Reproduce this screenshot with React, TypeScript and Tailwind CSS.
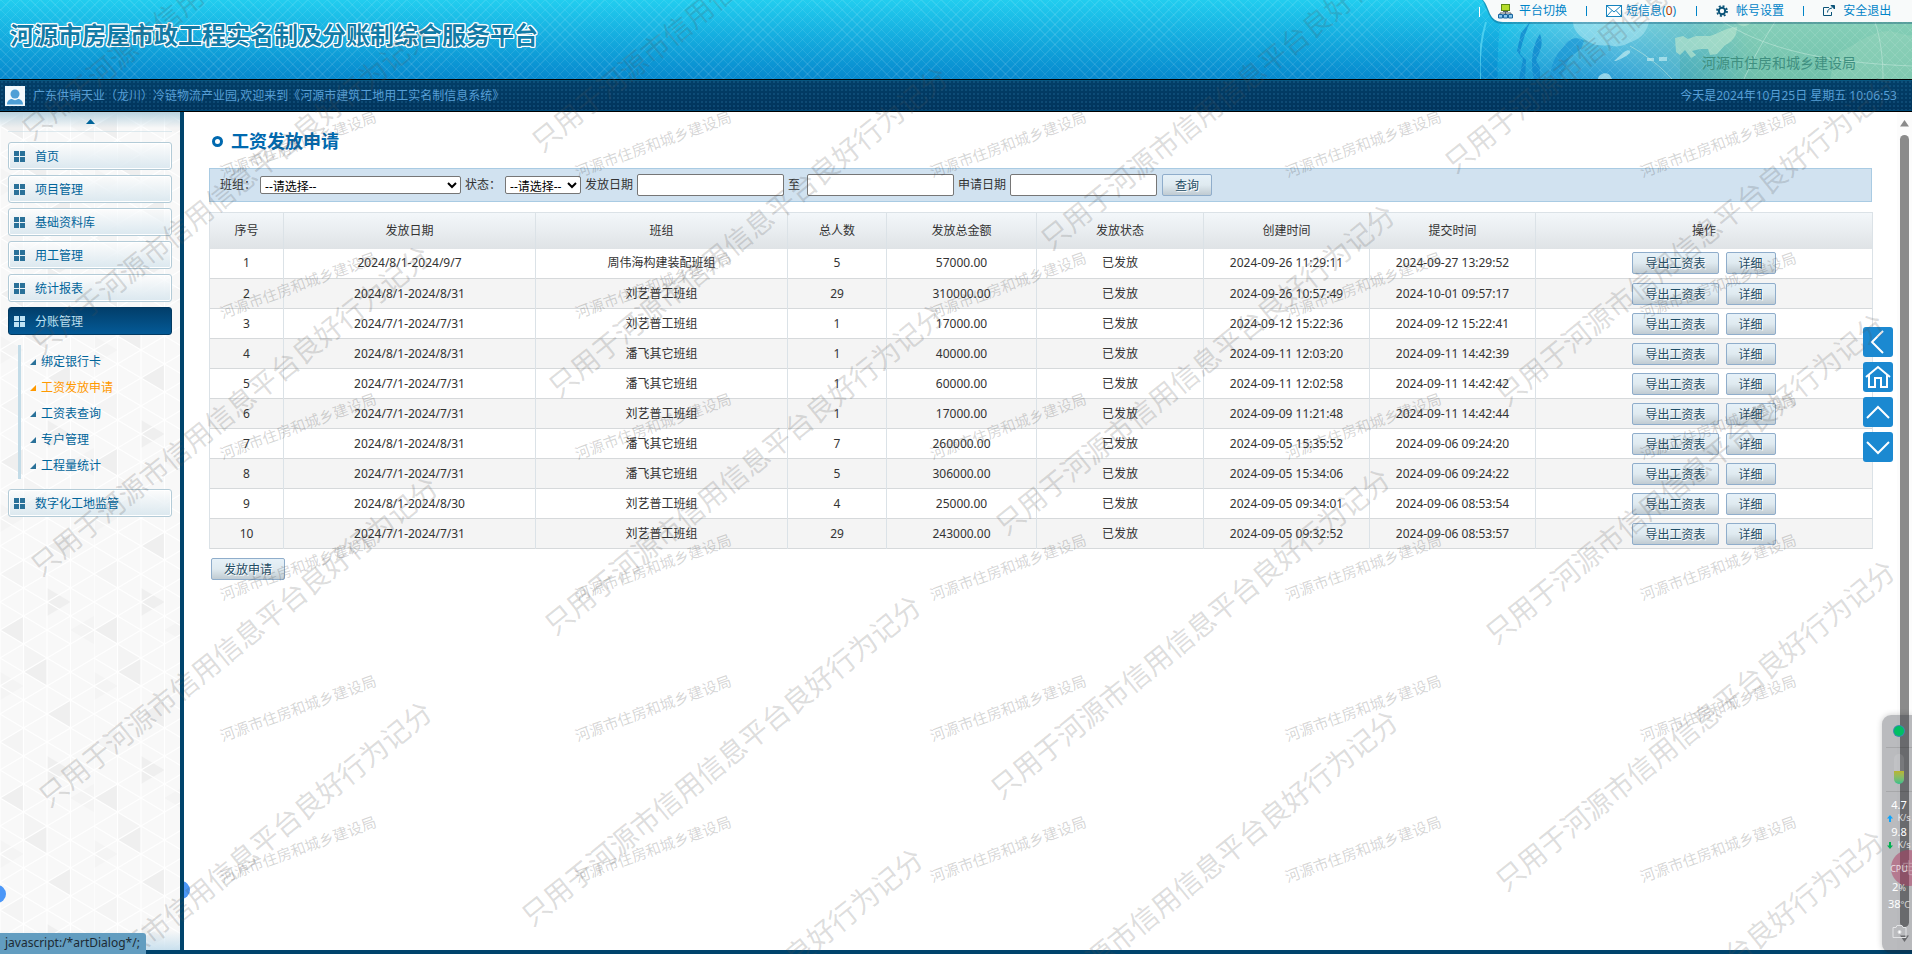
import { useState } from "react";
import { clsx } from "clsx";

const MENUS = ["首页", "项目管理", "基础资料库", "用工管理", "统计报表"];

const SUB_MENUS = ["绑定银行卡", "工资发放申请", "工资表查询", "专户管理", "工程量统计"];

const ROWS = [
  { date: "2024/8/1-2024/9/7", team: "周伟海构建装配班组", count: 5, amount: "57000.00", created: "2024-09-26 11:29:11", submitted: "2024-09-27 13:29:52" },
  { date: "2024/8/1-2024/8/31", team: "刘艺普工班组", count: 29, amount: "310000.00", created: "2024-09-26 10:57:49", submitted: "2024-10-01 09:57:17" },
  { date: "2024/7/1-2024/7/31", team: "刘艺普工班组", count: 1, amount: "17000.00", created: "2024-09-12 15:22:36", submitted: "2024-09-12 15:22:41" },
  { date: "2024/8/1-2024/8/31", team: "潘飞其它班组", count: 1, amount: "40000.00", created: "2024-09-11 12:03:20", submitted: "2024-09-11 14:42:39" },
  { date: "2024/7/1-2024/7/31", team: "潘飞其它班组", count: 1, amount: "60000.00", created: "2024-09-11 12:02:58", submitted: "2024-09-11 14:42:42" },
  { date: "2024/7/1-2024/7/31", team: "刘艺普工班组", count: 1, amount: "17000.00", created: "2024-09-09 11:21:48", submitted: "2024-09-11 14:42:44" },
  { date: "2024/8/1-2024/8/31", team: "潘飞其它班组", count: 7, amount: "260000.00", created: "2024-09-05 15:35:52", submitted: "2024-09-06 09:24:20" },
  { date: "2024/7/1-2024/7/31", team: "潘飞其它班组", count: 5, amount: "306000.00", created: "2024-09-05 15:34:06", submitted: "2024-09-06 09:24:22" },
  { date: "2024/8/1-2024/8/30", team: "刘艺普工班组", count: 4, amount: "25000.00", created: "2024-09-05 09:34:01", submitted: "2024-09-06 08:53:54" },
  { date: "2024/7/1-2024/7/31", team: "刘艺普工班组", count: 29, amount: "243000.00", created: "2024-09-05 09:32:52", submitted: "2024-09-06 08:53:57" },
];

const COLUMNS = [
  { title: "序号", width: "w-[74px]" },
  { title: "发放日期", width: "w-[252px]" },
  { title: "班组", width: "w-[252px]" },
  { title: "总人数", width: "w-[99px]" },
  { title: "发放总金额", width: "w-[150px]" },
  { title: "发放状态", width: "w-[167px]" },
  { title: "创建时间", width: "w-[166px]" },
  { title: "提交时间", width: "w-[166px]" },
  { title: "操作", width: "w-[337px]" },
];

// 水印中心点
const LARGE_MARKS = [
  [221, -26], [231, 188], [230, 410], [238, 641], [232, 866],
  [731, -14], [748, 231], [744, 469], [721, 760], [723, 1013],
  [1240, 84], [1195, 369], [1190, 633], [1198, 875],
  [1644, 7], [1696, 240], [1685, 478], [1695, 725], [1684, 995],
];
const SMALL_MARKS = [144, 285, 426, 567, 708, 849].flatMap((y) =>
  [298, 653, 1008, 1363, 1718].map((x) => [x, y])
);

function Watermarks() {
  return (
    <div aria-hidden="true" className="pointer-events-none absolute inset-0 z-20 overflow-hidden">
      {LARGE_MARKS.map(([x, y]) => (
        <span
          key={`l-${x}-${y}`}
          className="absolute -translate-x-1/2 -translate-y-1/2 -rotate-39 whitespace-nowrap text-[28px] leading-8 text-[#505050]/20"
          style={{ left: x, top: y }}
        >
          只用于河源市信用信息平台良好行为记分
        </span>
      ))}
      {SMALL_MARKS.map(([x, y]) => (
        <span
          key={`s-${x}-${y}`}
          className="absolute -translate-x-1/2 -translate-y-1/2 -rotate-20 whitespace-nowrap text-[15px] leading-5 text-[#404040]/22"
          style={{ left: x, top: y }}
        >
          河源市住房和城乡建设局
        </span>
      ))}
    </div>
  );
}

function GlobeArt() {
  return (
    <svg className="absolute top-0 right-0 h-[79px] w-[432px]" viewBox="0 0 432 79" preserveAspectRatio="none">
      <defs>
        <linearGradient id="sea" x1="0" y1="0" x2="1" y2="0">
          <stop offset="0" stopColor="#1cc4ea" />
          <stop offset="0.1" stopColor="#45c8e8" />
          <stop offset="0.28" stopColor="#72d0e6" />
          <stop offset="0.46" stopColor="#74c8cc" />
          <stop offset="0.6" stopColor="#86cfba" />
          <stop offset="1" stopColor="#84ceb6" />
        </linearGradient>
        <linearGradient id="deep" x1="0" y1="0" x2="0" y2="1">
          <stop offset="0.3" stopColor="#0b8fd0" stopOpacity="0" />
          <stop offset="1" stopColor="#0d86cc" stopOpacity="0.7" />
        </linearGradient>
        <linearGradient id="shade" x1="0" y1="0" x2="0" y2="1">
          <stop offset="0.3" stopColor="#3fa088" stopOpacity="0" />
          <stop offset="1" stopColor="#3fa088" stopOpacity="0.3" />
        </linearGradient>
        <linearGradient id="fade" x1="0" y1="0" x2="1" y2="0">
          <stop offset="0.3" stopColor="#fff" />
          <stop offset="0.65" stopColor="#fff" stopOpacity="0" />
        </linearGradient>
        <mask id="left">
          <rect width="432" height="79" fill="url(#fade)" />
        </mask>
        <pattern id="net" width="10" height="10" patternUnits="userSpaceOnUse">
          <path d="M0 0 10 10M10 0 0 10" stroke="#fff" strokeOpacity="0.14" strokeWidth="0.800" />
        </pattern>
      </defs>
      <path d="M26 0C19 25 17 50 18 79H432V0Z" fill="url(#sea)" />
      <path d="M26 0C19 25 17 50 18 79H432V0Z" fill="url(#deep)" mask="url(#left)" />
      <rect x="200" width="232" height="79" fill="url(#shade)" />
      <path d="M6 22C0 42-1 60 0 79" fill="none" stroke="#5fdcf5" strokeWidth="2" opacity="0.7" />
      <path d="M50 22c-4 10-9 22-10 32l6 6-1 19h-6l4-20-6-8 4-18zM60 34c4 10 0 18-4 26l4 8 0 11h-6c-4-14-2-34 6-45z" fill="#0e86cc" opacity="0.75" />
      <path d="M84 46c5-8 14-10 20-5l-3 8-11 8-10 22H70c0-12 5-24 14-33z" fill="#1490d2" opacity="0.6" />
      <path d="M93 22h76c-2 8-6 16-18 20-8 4-14 6-22 3-12 2-20-2-26-7-6-4-10-10-10-16z" fill="#b4eaf2" opacity="0.5" />
      <path d="M134 61l10-9c4-3 7-2 6 1-4 4-10 6-14 8zM167 58h7v3h-7zM179 57h8v4h-8zM118 79c0-5 10-9 13-2l1 2z" fill="#c4eef2" opacity="0.65" />
      <path d="M195 38l8-2 5 3 8-3h14c8-2 14-8 27-9 0 8-4 15-12 18l-8 9-7 1-2-6-8 0-8 2 4 4-5 3-6-8-5 5-4-3z" fill="#b4e2cc" opacity="0.7" />
      <path d="M256 22c6 7 12 4 16 0z" fill="#b4e2cc" opacity="0.6" />
      <path d="M350 79c2-12 8-22 8-26 18-8 30-20 48-22 12 0 20 6 26 4v44z" fill="#9cd6be" opacity="0.4" />
      <path d="M150 46c18 10 32 22 42 33M264 79c10-22 20-40 31-57M243 22c40 24 90 40 189 44M395 22c6 18 8 38 8 57" fill="none" stroke="#c9ecdf" strokeOpacity="0.5" />
      <rect x="18" width="414" height="79" fill="url(#net)" />
    </svg>
  );
}

function TopLinks() {
  return (
    <nav className="relative flex h-[22px] w-[433px] items-center pl-[19px] text-xs leading-4 text-[#0084c8]">
      <svg className="absolute top-0 left-0 -z-10" width="433" height="24" viewBox="0 0 433 24">
        <path d="M3 0C9 8 9 24 24 24H433V0Z" fill="#06486c" opacity="0.35" />
        <path d="M4 0C11 7 9 22 24 22H433V0Z" fill="#f8fafa" />
      </svg>
      <span className="absolute top-[7px] left-0 h-[10px] w-px bg-white" />
      <a href="#platform" className="flex items-center gap-[6px]">
        <svg width="15" height="15" viewBox="0 0 15 15">
          <rect x="3.5" y="0.5" width="8" height="6" fill="#b6dc2a" stroke="#5f8a12" />
          <path d="M5 7.500h5M7.500 7v2M2 10.500v-1.500h11v1.500M7.500 9v2" fill="none" stroke="#57606a" />
          <path d="M.5 10.500h4v3.500h-4zM5.500 10.500h4v3.500h-4zM10.500 10.500h4v3.500h-4z" fill="#8cc8ee" stroke="#1b669f" />
        </svg>
        平台切换
      </a>
      <span className="ml-[19px] h-[10px] w-px bg-[#0084c8]" />
      <a href="#message" className="ml-[19px] flex items-center gap-1">
        <svg width="16" height="12" viewBox="0 0 16 12" fill="none" stroke="#1683be">
          <rect x="0.5" y="0.5" width="15" height="11" fill="#fff" />
          <path d="M.5.5 8 7 15.500.5M.5 11.500 6 5.500M15.500 11.500 10 5.500" />
        </svg>
        <span>短信息(<b className="font-normal text-[#b03a00]">0</b>)</span>
      </a>
      <span className="ml-5 h-[10px] w-px bg-[#0084c8]" />
      <a href="#account" className="ml-[19px] flex items-center gap-2">
        <svg width="12" height="12" viewBox="0 0 12 12" fill="none" stroke="#0a5378">
          <circle cx="6" cy="6" r="3.200" strokeWidth="2" />
          <circle cx="6" cy="6" r="5" strokeWidth="1.800" strokeDasharray="1.963 1.963" />
        </svg>
        帐号设置
      </a>
      <span className="ml-[19px] h-[10px] w-px bg-[#0084c8]" />
      <a href="#logout" className="ml-[19px] flex items-center gap-2">
        <svg width="12" height="12" viewBox="0 0 12 12" fill="none" stroke="#0a5378">
          <path d="M6 2.500H.5v8h8V7M4.500 7.500C4.500 5 6 3.500 9 3" />
          <path d="M8 .5h3.500V4z" fill="#0a5378" />
        </svg>
        安全退出
      </a>
    </nav>
  );
}

function Header() {
  return (
    <header className="shrink-0">
      <div className="relative flex h-[79px] items-start justify-between bg-[repeating-linear-gradient(45deg,rgba(255,255,255,0.09)_0_1px,transparent_1px_7px),repeating-linear-gradient(-45deg,rgba(255,255,255,0.09)_0_1px,transparent_1px_7px),linear-gradient(#22cdef,#0688cd)]">
        <h1 className="pt-[19px] pl-[10px] text-2xl leading-8 font-bold text-[#127ba6] [text-shadow:1px_0_#fff,-1px_0_#fff,0_1px_#fff,0_-1px_#fff,1px_1px_#fff,-1px_-1px_#fff,1px_-1px_#fff,-1px_1px_#fff,0_0_2px_#fff]">
          河源市房屋市政工程实名制及分账制综合服务平台
        </h1>
        <GlobeArt />
        <div className="relative isolate flex flex-col items-end">
          <TopLinks />
          <p className="mt-[31px] mr-14 text-sm leading-5 text-[#3f8f80]">河源市住房和城乡建设局</p>
        </div>
      </div>
      <div className="flex h-[33px] items-center justify-between border-y border-black bg-[radial-gradient(circle,rgba(60,150,200,0.2)_0_0.7px,transparent_1px),linear-gradient(#033f68,#01345c)] bg-size-[4px_4px,100%_100%] pr-[15px] pl-[5px] text-xs leading-4 text-[#579fd6] shadow-[inset_0_1px_#07567f,inset_0_-1px_#004a78]">
        <div className="flex items-center gap-2">
          <svg width="20" height="20" viewBox="0 0 20 20">
            <rect width="20" height="20" fill="#f2f8fc" />
            <circle cx="10" cy="8" r="4.500" fill="#4f9fd6" />
            <path d="M2 18.500c0-4 3-5.500 5-5.500 2 1.500 4 1.500 6 0 2 0 5 1.500 5 5.500z" fill="#4f9fd6" />
          </svg>
          <span className="pt-px">广东供销天业（龙川）冷链物流产业园,欢迎来到《河源市建筑工地用工实名制信息系统》</span>
        </div>
        <span className="pt-px">今天是2024年10月25日 星期五 10:06:53</span>
      </div>
    </header>
  );
}

function TriangleBackdrop() {
  return (
    <svg className="absolute inset-0 h-full w-full">
      <defs>
        <pattern id="tri" width="94" height="168" patternUnits="userSpaceOnUse">
          <rect width="94" height="168" fill="#f8f8f8" />
          <path
            d="M0 14 23.500 0V28ZM47 98 70.500 84V112ZM23.500 56 47 42V70ZM70.500 154 47 140V168Z"
            fill="#efefef"
          />
          <path d="M23.500 28 47 42 23.500 56ZM70.500 14 94 0V28ZM0 56 23.500 70 0 84ZM0 126 23.500 140V112Z" fill="#f4f4f4" />
          <path
            d="M0 0V168M23.500 0V168M47 0V168M70.500 0V168M0 14 23.500 0 70.500 28 94 14M0 14 47 42 94 14M0 42 47 14 70.500 0 94 14M0 42 47 70 94 42M0 70 47 42 94 70M0 98 47 70 94 98M0 70 47 98 94 70M0 98 47 126 94 98M0 126 47 98 94 126M0 126 47 154 94 126M0 154 47 126 94 154M0 154 23.500 168M47 154 23.500 168M47 154 70.500 168 94 154"
            fill="none"
            stroke="#fff"
            strokeWidth="1.200"
          />
        </pattern>
      </defs>
      <rect width="100%" height="100%" fill="url(#tri)" />
    </svg>
  );
}

function MenuButton({ label, active }: { label: string; active?: boolean }) {
  return (
    <button
      type="button"
      className={clsx(
        "flex h-7 w-full items-center gap-[10px] rounded-[3px] border pl-[5px] text-xs leading-4",
        active
          ? "border-[#023a62] bg-linear-to-b from-[#023e6a] to-[#045a97] text-[#bfe2f4]"
          : "border-[#b3cbd7] bg-linear-to-b from-white/60 to-[#dbe8ef] text-[#00649a] shadow-[inset_0_0_0_1px_#fff]"
      )}
    >
      <svg width="11" height="11" viewBox="0 0 11 11" fill={active ? "#bfe2f4" : "#2a7199"}>
        <path d="M0 0h5v5H0zM6 0h5v5H6zM0 6h5v5H0zM6 6h5v5H6z" />
      </svg>
      <span className="pt-px">{label}</span>
    </button>
  );
}

function Sidebar() {
  const [current, setCurrent] = useState("工资发放申请");

  return (
    <aside className="relative w-[184px] shrink-0 border-r-4 border-[#00446c] bg-[#f8f8f8]">
      <TriangleBackdrop />
      <div className="absolute inset-x-0 top-0 h-4 bg-linear-to-b from-[#b9d3e0] to-transparent" />
      <div className="absolute inset-x-0 bottom-0 h-5 bg-linear-to-t from-[#c9e0ee] to-transparent" />
      <div className="relative px-2">
        <div className="mb-[10px] flex h-5 justify-center border-b border-[#c9dde6]/60 pt-[7px]">
          <svg width="9" height="5" viewBox="0 0 9 5">
            <path d="M4.500 0 9 5H0z" fill="#00649a" />
          </svg>
        </div>
        <div className="space-y-[5px]">
          {MENUS.map((label) => (
            <MenuButton key={label} label={label} />
          ))}
          <MenuButton label="分账管理" active />
        </div>
        <ul className="mt-[10px] mb-[10px] ml-[10px] border-l-3 border-[#c2dbe7] pt-1 pl-[9px] text-xs">
          {SUB_MENUS.map((label) => (
            <li key={label}>
              <button
                type="button"
                onClick={() => setCurrent(label)}
                className={clsx("flex h-[26px] items-center gap-[5px]", current === label ? "text-[#ff9900]" : "text-[#00649a]")}
              >
                <svg width="6" height="6" viewBox="0 0 6 6">
                  <path d="M6 0V6H0z" fill={current === label ? "#ff9900" : "#2a7199"} />
                </svg>
                {label}
              </button>
            </li>
          ))}
        </ul>
        <MenuButton label="数字化工地监管" />
      </div>
      <span className="absolute top-[773px] -left-3 size-[18px] rounded-full bg-[#4b97f8]" />
    </aside>
  );
}

function ActionButton({ children }: { children: string }) {
  return (
    <button
      type="button"
      className="block h-[22px] rounded-[2px] border border-[#8fadcb] bg-linear-to-b from-[#e6f1f8] via-[#dfeaf0] to-[#c0cbd2] px-3 pt-[2px] text-xs leading-4 text-[#1f4d66] [text-shadow:1px_1px_#fff]"
    >
      {children}
    </button>
  );
}

const FIELD = "border border-[#767676] bg-white rounded-[2px] text-black";

function SearchBar() {
  return (
    <form className="flex h-[34px] items-center gap-1 border border-[#a9cbe3] bg-[#d1e2f0] pl-[10px]" onSubmit={(e) => e.preventDefault()}>
      <label htmlFor="team">班组：</label>
      <select id="team" className={clsx(FIELD, "h-[18px] w-[201px]")}>
        <option>--请选择--</option>
      </select>
      <label htmlFor="status">状态：</label>
      <select id="status" className={clsx(FIELD, "h-[18px] w-[76px]")}>
        <option>--请选择--</option>
      </select>
      <label htmlFor="payFrom">发放日期</label>
      <input id="payFrom" type="text" className={clsx(FIELD, "h-[22px] w-[147px] px-1")} />
      <label htmlFor="payTo" className="pr-[3px]">至</label>
      <input id="payTo" type="text" className={clsx(FIELD, "h-[22px] w-[147px] px-1")} />
      <label htmlFor="applyDate">申请日期</label>
      <input id="applyDate" type="text" className={clsx(FIELD, "mr-px h-[22px] w-[147px] px-1")} />
      <ActionButton>查询</ActionButton>
    </form>
  );
}

function PayTable() {
  return (
    <table className="mt-[10px] w-full table-fixed border-collapse border border-[#dbe2e7] text-center">
      <colgroup>
        {COLUMNS.map((col) => (
          <col key={col.title} className={col.width} />
        ))}
      </colgroup>
      <thead>
        <tr className="h-9 bg-linear-to-b from-[#f3f7fa] to-[#dfe3e6]">
          {COLUMNS.map((col) => (
            <th key={col.title} className="border-x border-[#dbe2e7] font-normal">{col.title}</th>
          ))}
        </tr>
      </thead>
      <tbody>
        {ROWS.map((row, index) => (
          <tr key={index} className="h-[30px] border-b border-[#d6d9db] even:bg-[#f4f4f4]">
            <td className="border-x border-[#dbe2e7]">{index + 1}</td>
            <td className="border-x border-[#dbe2e7]">{row.date}</td>
            <td className="border-x border-[#dbe2e7]">{row.team}</td>
            <td className="border-x border-[#dbe2e7]">{row.count}</td>
            <td className="border-x border-[#dbe2e7]">{row.amount}</td>
            <td className="border-x border-[#dbe2e7]">已发放</td>
            <td className="border-x border-[#dbe2e7]">{row.created}</td>
            <td className="border-x border-[#dbe2e7]">{row.submitted}</td>
            <td className="border-x border-[#dbe2e7]">
              <div className="flex justify-center gap-[7px]">
                <ActionButton>导出工资表</ActionButton>
                <ActionButton>详细</ActionButton>
              </div>
            </td>
          </tr>
        ))}
      </tbody>
    </table>
  );
}

const FLOAT_ICONS = [
  { label: "后退", path: "M20 4 9 15 20 26" },
  { label: "主页", path: "M3 15 15 5 27 15M6 13V25H12V16H18V25H24V13" },
  { label: "向上", path: "M4 21 15 10 26 21" },
  { label: "向下", path: "M4 10 15 21 26 10" },
];

function FloatButtons() {
  return (
    <div className="absolute top-[327px] right-[19px] z-10 flex flex-col gap-[5px]">
      {FLOAT_ICONS.map((item) => (
        <button key={item.label} type="button" aria-label={item.label} className="size-[30px] rounded-[3px] bg-[#1b89d1]">
          <svg width="30" height="30" viewBox="0 0 30 30" fill="none" stroke="#fff" strokeWidth="2">
            <path d={item.path} />
          </svg>
        </button>
      ))}
    </div>
  );
}

// 右下角系统监控悬浮条
function MonitorWidget() {
  return (
    <div className="absolute right-0 bottom-px z-30 flex h-[238px] w-[30px] flex-col items-center overflow-hidden rounded-l-[9px] bg-[#1a1e28]/30 pl-1 text-white shadow-[0_0_6px_rgba(0,0,0,0.2)]">
      <span className="mt-[11px] size-[10px] shrink-0 rounded-full bg-[#00bf63] ring-1 ring-[#3a8cae]" />
      <span className="mt-[11px] h-px w-full shrink-0 bg-black/10" />
      <span className="mt-[6px] flex h-[30px] w-[10px] shrink-0 items-end overflow-hidden rounded-full bg-white/10">
        <span className="h-[13px] w-full bg-linear-to-b from-[#b9b52c] to-[#2bc08c]" />
      </span>
      <span className="mt-[7px] h-px w-full shrink-0 bg-black/10" />
      <span className="mt-[5px] text-[11px] leading-4">4.7</span>
      <span className="flex items-center gap-1 text-[9px] leading-[10px] whitespace-nowrap text-white/75">
        <svg width="6" height="7" viewBox="0 0 6 7" fill="#0aa5ff"><path d="M3 0 6 3.500H4V7H2V3.500H0z" /></svg>
        K/s
      </span>
      <span className="mt-px text-[11px] leading-4">9.8</span>
      <span className="flex items-center gap-1 text-[9px] leading-[10px] whitespace-nowrap text-white/75">
        <svg width="6" height="7" viewBox="0 0 6 7" fill="#00b050"><path d="M3 7 6 3.500H4V0H2V3.500H0z" /></svg>
        K/s
      </span>
      <span className="absolute top-[135px] left-[9px] flex size-9 items-center justify-center rounded-full bg-[#b03a62]/50 text-base leading-5 text-white/25">电</span>
      <span className="relative mt-[11px] text-[9px] leading-4 text-white/75">CPU</span>
      <span className="relative mt-[2px] text-[11px] leading-4">2<small className="text-[9px] text-white/75">%</small></span>
      <span className="relative text-[11px] leading-4">38<small className="text-[9px] text-white/75">°C</small></span>
      <svg className="mt-3 shrink-0" width="15" height="13" viewBox="0 0 15 13" fill="none" stroke="#e3e4e6">
        <path d="M1 2.500h3l1-2h5l1 2h3V12.500H1z" />
        <circle cx="7.500" cy="7" r="1.500" fill="#fff" />
      </svg>
    </div>
  );
}

export default function App() {
  return (
    <div className="relative flex h-screen flex-col overflow-hidden bg-white font-['Noto_Sans','Noto_Sans_CJK_SC',sans-serif] text-xs leading-4 text-[#333]">
      <Header />
      <div className="flex min-h-0 flex-1 border-b-4 border-[#00446c]">
        <Sidebar />
        <main className="relative min-w-0 flex-1 overflow-hidden px-[25px] pt-[15px]">
          <h2 className="mb-[13px] flex items-center gap-2 pl-[3px] text-lg leading-7 font-bold text-[#0069af]">
            <span className="size-[11px] rounded-full border-[3px] border-[#0069af]" />
            工资发放申请
          </h2>
          <SearchBar />
          <PayTable />
          <div className="mt-[9px] ml-[2px] flex">
            <ActionButton>发放申请</ActionButton>
          </div>
          <span className="absolute top-[769px] -left-3 size-[18px] rounded-full bg-[#4b97f8]" />
        </main>
        <div className="flex w-[15px] shrink-0 flex-col items-center bg-[#fcfcfc] pt-2 pb-2">
          <svg width="9" height="7" viewBox="0 0 9 7"><path d="M4.500 0 9 6.500H0z" fill="#8b8b8b" /></svg>
          <span className="my-2 w-[9px] flex-1 rounded-full bg-[#8b8b8b]" />
          <svg width="9" height="7" viewBox="0 0 9 7"><path d="M4.500 7 9 .5H0z" fill="#8b8b8b" /></svg>
        </div>
      </div>
      <FloatButtons />
      <Watermarks />
      <MonitorWidget />
      <div className="absolute bottom-0 left-0 z-30 h-[21px] rounded-tr-[3px] bg-[#629dc0] pr-[6px] pl-[5px] text-xs leading-5 whitespace-nowrap text-[#1c2a33]">
        javascript:/*artDialog*/;
      </div>
    </div>
  );
}
